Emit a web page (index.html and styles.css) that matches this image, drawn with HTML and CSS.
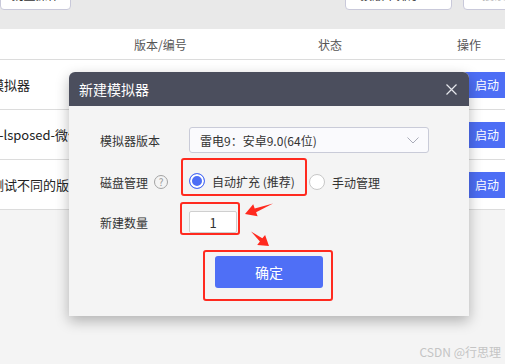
FILE: index.html
```html
<!DOCTYPE html>
<html lang="zh">
<head>
    <meta charset="UTF-8">
    <title>新建模拟器</title>
    <link rel="stylesheet" href="styles.css">
</head>
<body>
    <div class="toolbar">
        <span class="tool-btn first">批量操作</span>
        <span class="tool-btn sort">按版本排序 <i class="caret">▾</i></span>
        <span class="tool-btn search">搜索</span>
    </div>

    <div class="list">
        <div class="row head">
            <div class="cell name"></div>
            <div class="cell">版本/编号</div>
            <div class="cell">状态</div>
            <div class="cell">操作</div>
        </div>
        <div class="row">
            <div class="cell name">模拟器</div>
            <div class="cell"></div>
            <div class="cell"></div>
            <div class="cell"><span class="start-btn">启动</span></div>
        </div>
        <div class="row">
            <div class="cell name">o-lsposed-微信</div>
            <div class="cell"></div>
            <div class="cell"></div>
            <div class="cell"><span class="start-btn">启动</span></div>
        </div>
        <div class="row">
            <div class="cell name">测试不同的版本</div>
            <div class="cell"></div>
            <div class="cell"></div>
            <div class="cell"><span class="start-btn">启动</span></div>
        </div>
    </div>

    <!-- 弹窗 -->
    <div class="modal">
        <div class="modal-head">
            <span class="modal-title">新建模拟器</span>
            <svg class="close" width="11" height="11" viewBox="0 0 11 11">
                <path d="M0.5 0.5L10.5 10.5M10.5 0.5L0.5 10.5" stroke="#e6e7ec" stroke-width="1.2" fill="none"/>
            </svg>
        </div>
        <div class="modal-body">
            <div class="form-row">
                <div class="form-label">模拟器版本</div>
                <div class="select">
                    <span>雷电9：安卓9.0(64位)</span>
                    <svg width="12" height="7" viewBox="0 0 12 7">
                        <polyline points="0.5,0.5 6,6 11.5,0.5" stroke="#a9abb8" stroke-width="1" fill="none"/>
                    </svg>
                </div>
            </div>
            <div class="form-row disk">
                <div class="form-label shift-lg">磁盘管理 <span class="help">?</span></div>
                <div class="mark mark-radio">
                    <span class="radio checked"></span>
                    <span class="radio-text">自动扩充 (推荐)</span>
                </div>
                <div class="radio-item shift-lg">
                    <span class="radio"></span>
                    <span class="radio-text">手动管理</span>
                </div>
            </div>
            <div class="form-row count">
                <div class="form-label shift-sm">新建数量</div>
                <div class="mark mark-input">
                    <div class="num-input">1</div>
                </div>
            </div>
            <div class="form-row">
                <div class="mark mark-btn">
                    <span class="ok-btn">确定</span>
                </div>
            </div>
        </div>
    </div>

    <!-- 标注箭头 -->
    <svg class="arrows" width="505" height="364" viewBox="0 0 505 364">
        <polygon points="273,203.5 254.7,208.4 253.2,204.3 245,214 257.6,216.3 256.1,212.2" fill="#ff2a1f"/>
        <polygon points="251,231.5 259.9,241.5 257.2,244.9 269,246 265.1,234.9 262.3,238.3" fill="#ff2a1f"/>
    </svg>

    <div class="watermark">CSDN @行思理</div>
</body>
</html>
```

FILE: styles.css
```css
*{
    margin: 0;
    padding: 0;
    box-sizing: border-box;
}
body{
    width: 505px;
    height: 364px;
    overflow: hidden;
    position: relative;
    background-color: #f4f4f4;
    font-family: "Noto Sans CJK SC", "Noto Sans", sans-serif;
    color: #333;
}
/* 顶部工具栏 */
.toolbar{
    height: 29px;
    display: flex;
    background-color: #e9e9e9;
}
.tool-btn{
    height: 30px;
    margin-top: -20px;
    line-height: 28px;
    font-size: 12px;
    color: #333;
    text-align: center;
    background-color: #fff;
    border: 1px solid #c9c9da;
    border-radius: 4px;
}
.tool-btn.first{
    width: 71px;
}
.tool-btn.sort{
    width: 107px;
    margin-left: auto;
}
.tool-btn.search{
    width: 62px;
    margin-left: 11px;
    margin-right: -20px;
    color: #bbb;
}
.caret{
    font-style: normal;
    color: #999;
    margin-left: 8px;
}
/* 列表 */
.list{
    background-color: #fff;
}
.row{
    display: grid;
    grid-template-columns: 134px 184px 139px 1fr;
    align-items: center;
    height: 50px;
    border-bottom: 1px solid #dcdcdc;
    font-size: 13px;
    color: #222;
}
.row.head{
    height: 31px;
    font-size: 12px;
    color: #555;
}
.cell.name{
    margin-left: -9px;
    white-space: nowrap;
}
.start-btn{
    display: block;
    width: 52px;
    height: 26px;
    margin-left: 6px;
    line-height: 26px;
    padding-left: 12px;
    font-size: 12px;
    color: #fff;
    background-color: #4d6ef5;
    border-radius: 3px;
}
/* 弹窗 */
.modal{
    position: absolute;
    left: 69px;
    top: 72px;
    width: 400px;
    background-color: #f4f4f4;
    border-radius: 6px 6px 0 0;
    box-shadow: 0 5px 14px rgba(0, 0, 0, 0.28);
}
.modal-head{
    height: 34px;
    display: flex;
    align-items: center;
    justify-content: space-between;
    padding: 0 12px 0 10px;
    background-color: #4b4e5d;
    border-radius: 6px 6px 0 0;
}
.modal-title{
    font-size: 14px;
    color: #fff;
}
.modal-body{
    padding: 21px 40px 15px 31px;
}
.form-row{
    display: flex;
    align-items: center;
}
.form-label{
    width: 89px;
    flex-shrink: 0;
    display: flex;
    align-items: center;
    font-size: 12px;
    color: #333;
}
.shift-lg{
    margin-top: 10px;
}
.shift-sm{
    margin-top: 7px;
}
.help{
    width: 14px;
    height: 14px;
    margin-left: 6px;
    border: 1px solid #a3a3a3;
    border-radius: 50%;
    font-size: 10px;
    line-height: 12px;
    text-align: center;
    color: #999;
}
.select{
    width: 240px;
    height: 26px;
    display: flex;
    align-items: center;
    justify-content: space-between;
    padding: 0 9px 0 10px;
    font-size: 12px;
    color: #333;
    background-color: #fafafd;
    border: 1px solid #c9cbd8;
    border-radius: 3px;
}
.disk{
    height: 38px;
    margin-top: 5px;
}
.count{
    margin-top: 6px;
}
/* 红色标注框 */
.mark{
    border: 2px solid #ff2a1f;
    border-radius: 3px;
}
.mark-radio{
    width: 126px;
    height: 38px;
    margin-left: -8px;
    padding: 8px 0 0 6px;
    display: flex;
    align-items: center;
}
.mark-input{
    width: 60px;
    height: 33px;
    margin-left: -9px;
    padding: 7px 1px 0 7px;
}
.mark-btn{
    width: 130px;
    height: 51px;
    margin: 15px 0 0 103px;
    padding: 4px 8px 11px 10px;
}
.radio-item{
    display: flex;
    align-items: center;
    margin-left: 2px;
}
.radio{
    width: 16px;
    height: 16px;
    flex-shrink: 0;
    border: 1px solid #c8c8c8;
    border-radius: 50%;
    background-color: #fff;
}
.radio.checked{
    border-color: #4d6ef5;
    background-color: #4d6ef5;
    box-shadow: inset 0 0 0 2px #fff;
}
.radio-text{
    margin-left: 7px;
    font-size: 12px;
    color: #333;
    white-space: nowrap;
}
.num-input{
    width: 48px;
    height: 22px;
    line-height: 22px;
    text-align: center;
    font-size: 13px;
    color: #333;
    background-color: #fff;
    border: 1px solid #cfcfcf;
    border-radius: 2px;
}
.ok-btn{
    display: block;
    width: 108px;
    height: 32px;
    line-height: 32px;
    text-align: center;
    font-size: 14px;
    color: #fff;
    background-color: #4f6ff6;
    border-radius: 3px;
}
.arrows{
    position: absolute;
    left: 0;
    top: 0;
}
.watermark{
    position: absolute;
    right: 4px;
    bottom: 4px;
    font-size: 12px;
    color: #c4c4c4;
}
```
